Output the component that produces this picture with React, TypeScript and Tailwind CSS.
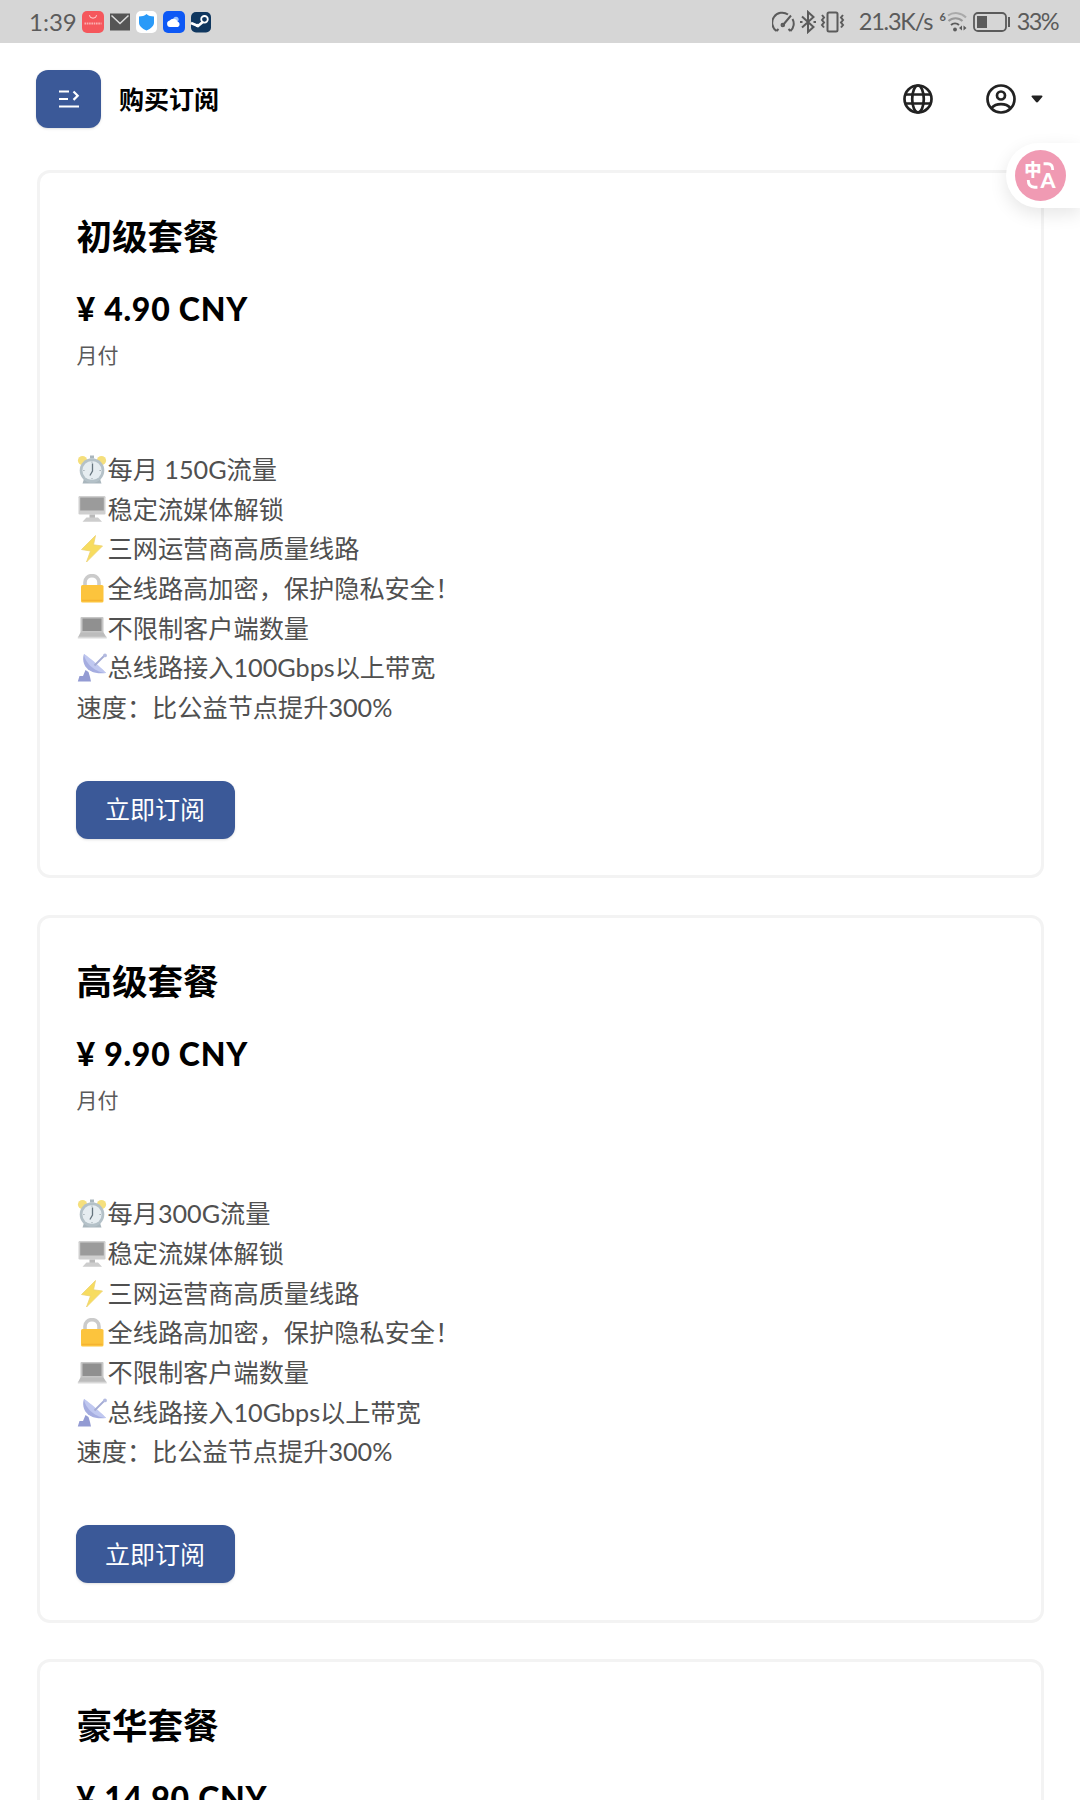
import React from 'react';

interface Plan {
  name: string;
  price: string;
  traffic: string;
  bandwidth: string;
}

const plans: Plan[] = [
  { name: '初级套餐', price: '4.90', traffic: '每月 150G流量', bandwidth: '总线路接入100Gbps以上带宽' },
  { name: '高级套餐', price: '9.90', traffic: '每月300G流量', bandwidth: '总线路接入10Gbps以上带宽' },
  { name: '豪华套餐', price: '14.90', traffic: '每月500G流量', bandwidth: '总线路接入10Gbps以上带宽' },
];

const emojiClass = 'h-[30px] w-[31px] shrink-0';

function ClockIcon() {
  return (
    <svg viewBox="0 0 31 30" className={emojiClass}>
      <circle cx="5.5" cy="5.5" r="4.6" fill="#f5df7c" />
      <circle cx="24.5" cy="5.5" r="4.6" fill="#f5df7c" />
      <path d="M13 .5h4v3h-4zM7 24h16l1.500 4.500h-19z" fill="#a9b6bd" />
      <circle cx="15" cy="15.5" r="12.3" fill="#b4c1c8" />
      <circle cx="15" cy="15.5" r="9.6" fill="#e6edf1" />
      <path d="M15.5 8.5V16l-2.600 4.500" fill="none" stroke="#66757e" strokeWidth="1.300" />
      <path d="M15 6.500v1.200M15 23v1.300M6.300 15.500h1.200M22.500 15.500h1.300" stroke="#9aa6ad" />
    </svg>
  );
}

function DesktopIcon() {
  return (
    <svg viewBox="0 0 31 30" className={emojiClass}>
      <rect x="1.5" y="2" width="27" height="18.500" rx="1.200" fill="#cfcfcf" />
      <rect x="3.200" y="3.500" width="23.600" height="13" fill="#9b9b9b" />
      <path d="M12.500 20.500h5.500v4h-5.500z" fill="#b9b9b9" />
      <path d="M9.500 23.500H21l4 4.200H5.500z" fill="#cdcdcd" />
    </svg>
  );
}

function BoltIcon() {
  return (
    <svg viewBox="0 0 31 30" className={emojiClass}>
      <path d="M18.500 1.500 4.500 15.500l9 1.500L9.500 28 25.500 12l-9-1.200z" fill="#f7dc5f" stroke="#ecd272" strokeWidth=".8" />
    </svg>
  );
}

function LockIcon() {
  return (
    <svg viewBox="0 0 31 30" className={emojiClass}>
      <path d="M8 13V8.300a7 6.700 0 0 1 14 0V13" fill="none" stroke="#cbcbcb" strokeWidth="3.600" />
      <rect x="4" y="11" width="22.500" height="17.500" rx="1.600" fill="#fcc43d" />
      <path d="M5 26.300h20.500" stroke="#f3b02f" />
    </svg>
  );
}

function LaptopIcon() {
  return (
    <svg viewBox="0 0 31 30" className={emojiClass}>
      <path d="M4.500 4h21a1 1 0 0 1 1 1v16h-23V5a1 1 0 0 1 1-1z" fill="#c6c6c6" />
      <path d="M5.500 5.500h19v12.500h-19z" fill="#909090" />
      <path d="M3.500 19.500h23l3 4.700H1z" fill="#bcbcbc" />
      <path d="M.8 23.700h28.900v1.800H.8z" fill="#d8d8d8" />
    </svg>
  );
}

function AntennaIcon() {
  return (
    <svg viewBox="0 0 31 30" className={emojiClass}>
      <path d="M8.500 17 6 23H2.500L.8 28.500H14L13 24l-1.500-5z" fill="#939bd3" />
      <path d="M7 1C4 9 8.500 22.500 29 20z" fill="#a5ade0" />
      <path d="M7 1C11 3 27 17 29 20 20 20 8 11 7 1z" fill="#c0c8f0" />
      <path d="M17.500 12.500 27.500 2.500" stroke="#a4abd4" strokeWidth="1.800" />
      <circle cx="28" cy="2.400" r="1.900" fill="#b3bae0" />
    </svg>
  );
}

function StatusBar() {
  return (
    <div className="flex h-[43px] items-center bg-[#d6d6d6] pr-[22px] pl-[29px] text-[#5b5b5b]">
      <span className="w-[53px] text-[24px] leading-[43px]">1:39</span>
      <div className="flex items-center gap-[5px]">
        <svg viewBox="0 0 22 22" className="size-[22px]">
          <rect width="22" height="22" rx="5" fill="#f5575c" />
          <path d="M7.500 4.200a3.500 3 0 0 0 7 0" fill="none" stroke="#ffd5d5" />
          <path d="M2.500 12.500h17" stroke="#fbb0b0" strokeWidth="2" strokeDasharray="1.6 .7" />
        </svg>
        <svg viewBox="0 0 22 22" className="size-[22px]">
          <path d="M1 2.500h20v17H1z" fill="#555" />
          <path d="m2.500 4.500 8.500 8 8.500-8" fill="none" stroke="#ddd" strokeWidth="1.500" />
        </svg>
        <svg viewBox="0 0 22 22" className="size-[22px]">
          <rect width="21" height="22" rx="5" fill="#fff" />
          <path d="M10.500 3C12.500 4.800 15 5.500 18 5.500v6c0 3.600-3 6-7.500 8C6 17.500 3 15.100 3 11.500v-6c3 0 5.500-.7 7.500-2.500z" fill="#2a9af8" />
        </svg>
        <svg viewBox="0 0 22 22" className="size-[22px]">
          <rect width="22" height="22" rx="5" fill="#0d58f5" />
          <circle cx="13" cy="8.300" r="2.600" fill="#9cc3ff" />
          <path d="M7 16a3.300 3.300 0 0 1-.3-6.500 4.500 4.500 0 0 1 7.800 1A3 3 0 0 1 15 16z" fill="#fff" />
        </svg>
        <svg viewBox="0 0 22 22" className="size-[22px]">
          <rect x="1" y="1" width="20" height="20.500" rx="5" fill="#10375f" />
          <path d="m1 12 7 3 6-5" fill="none" stroke="#fff" strokeWidth="2.800" />
          <circle cx="14.500" cy="8.300" r="3.300" fill="#10375f" stroke="#fff" strokeWidth="1.800" />
          <circle cx="7.500" cy="14.500" r="1.800" fill="#fff" />
        </svg>
      </div>
      <div className="ml-auto flex items-center">
        <svg viewBox="0 0 74 24" className="h-[24px] w-[74px]" fill="none" stroke="#5b5b5b" strokeWidth="2">
          <path d="M4.500 21A9.800 9.800 0 0 1 16 4.500M20.500 9a9.800 9.800 0 0 1-2 12M4.500 21l2-2M18.500 21l-2-2M11 15 19 5.500" />
          <circle cx="10.800" cy="15" r="1.300" />
          <path d="m30 6.500 11.500 10.500L36 22V2l5.500 5L30 17.500M28 12h2.500M41.500 12H44" />
          <rect x="55.500" y="2.500" width="10" height="19" rx="1.500" />
          <path d="m50 5 2 2.500-2 2.500 2 2.500-2 2.500 2 2.500M71 5l-2 2.500 2 2.500-2 2.500 2 2.500-2 2.500" />
        </svg>
        <span className="ml-[13px] w-[82px] text-[23.500px] leading-[43px] tracking-[-1.200px] whitespace-nowrap">21.3K/s</span>
        <svg viewBox="0 0 26 24" className="h-[24px] w-[26px] overflow-visible" fill="none" strokeWidth="2">
          <text x="-1.500" y="11" fontSize="11" fontWeight="700" fill="#5b5b5b">6</text>
          <path d="M7 5.500a14 14 0 0 1 18 2" stroke="#aaa" />
          <path d="M7.500 11a10 10 0 0 1 14 0" stroke="#999" />
          <path d="M10 15a6 6 0 0 1 8 0" stroke="#5b5b5b" />
          <circle cx="14" cy="19.500" r="1.900" fill="#5b5b5b" />
          <path d="m21 15.500-3 2.500 3 2.500zM22.500 15.500l3 2.500-3 2.500z" fill="#5b5b5b" />
        </svg>
        <svg viewBox="0 0 38 22" className="ml-[6px] h-[22px] w-[38px]">
          <rect x="1" y="2" width="32" height="18" rx="4" fill="none" stroke="#5b5b5b" strokeWidth="1.800" />
          <path d="M4 5h10v12H4zM35 6h2v10h-2z" fill="#5b5b5b" />
        </svg>
        <span className="ml-[6px] text-[23.500px] leading-[43px] tracking-[-1.600px]">33%</span>
      </div>
    </div>
  );
}

function Header() {
  return (
    <header className="flex h-[112px] items-center pr-[35px] pl-[36px]">
      <button className="flex h-[58px] w-[65px] items-center justify-center rounded-[12px] bg-[#3b5998] shadow-sm">
        <svg viewBox="0 0 22 20" className="h-[20px] w-[22px]" fill="none" stroke="#fff" strokeWidth="2.200">
          <path d="M1 2.500h10M1 10h9M1 17.500h20M15.500 2.500l4.200 4.200-4.200 4.200" />
        </svg>
      </button>
      <h1 className="ml-[18px] text-[25px] font-bold leading-none text-black">购买订阅</h1>
      <div className="ml-auto flex items-center">
        <svg viewBox="0 0 30 30" className="size-[30px]" fill="none" stroke="#222" strokeWidth="2.700">
          <circle cx="15" cy="15" r="13.500" />
          <ellipse cx="15" cy="15" rx="5.800" ry="13.500" />
          <path d="M2.500 10.500h25M2.500 19.500h25" />
        </svg>
        <svg viewBox="0 0 30 30" className="ml-[53px] size-[30px]" fill="none" stroke="#222" strokeWidth="2.700">
          <circle cx="15" cy="15" r="13.500" />
          <circle cx="15" cy="11.500" r="4" />
          <path d="M5.500 24c4.500-5.300 14.500-5.300 19 0" />
        </svg>
        <svg viewBox="0 0 12 8" className="mr-[2px] ml-[15px] h-[8px] w-[12px]">
          <path d="M1.500.5h9c1 0 1.300 1 .7 1.600l-4 4.700c-.7.800-1.700.8-2.400 0l-4-4.700C.2 1.500.5.500 1.500.500z" fill="#222" />
        </svg>
      </div>
    </header>
  );
}

function PlanCard({ plan }: { plan: Plan }) {
  const features = [
    { icon: <ClockIcon />, text: plan.traffic },
    { icon: <DesktopIcon />, text: '稳定流媒体解锁' },
    { icon: <BoltIcon />, text: '三网运营商高质量线路' },
    { icon: <LockIcon />, text: '全线路高加密，保护隐私安全！' },
    { icon: <LaptopIcon />, text: '不限制客户端数量' },
    { icon: <AntennaIcon />, text: plan.bandwidth },
    { icon: null, text: '速度：比公益节点提升300%' },
  ];

  return (
    <section className="h-[708px] shrink-0 rounded-[13px] border-3 border-[#f3f3f3] px-[37px] pt-[39px]">
      <h2 className="text-[35.500px] font-bold leading-[50px] text-black">{plan.name}</h2>
      <p className="mt-[25px] text-[32px] font-black leading-[44px] tracking-[0.750px] text-black">¥ {plan.price} CNY</p>
      <p className="mt-[8px] text-[21px] leading-[32px] text-[#5a5a5a]">月付</p>
      <ul className="mt-[79px] text-[25.200px] text-[#505050]">
        {features.map((feature, index) => (
          <li key={index} className="flex h-[39.670px] items-center whitespace-nowrap">
            {feature.icon}
            <span>{feature.text}</span>
          </li>
        ))}
      </ul>
      <button className="mt-[53px] -ml-px h-[58px] w-[159px] rounded-[12px] bg-[#3b5998] text-[25px] leading-none text-white shadow-sm">
        立即订阅
      </button>
    </section>
  );
}

function TranslateButton() {
  return (
    <div className="absolute top-[143px] right-0 flex h-[65px] w-[74px] items-center rounded-bl-full rounded-tl-full bg-white pl-[9px] shadow-[0_6px_18px_rgba(0,0,0,0.1)]">
      <svg viewBox="0 0 50 50" className="size-[51px]">
        <circle cx="25" cy="25" r="25" fill="#f09ab3" />
        <text x="9" y="25" fontSize="17" fontWeight="900" fill="#fff">中</text>
        <text x="25" y="37.500" fontSize="21" fontWeight="900" fill="#fff">A</text>
        <path d="M28 13.500h4q5 0 5 6M13 29.500q0 7 6 7h3" fill="none" stroke="#fff" strokeWidth="2.800" />
      </svg>
    </div>
  );
}

export default function App() {
  return (
    <div className="relative h-[1800px] w-[1080px] overflow-hidden bg-white font-[Lato,'Noto_Sans_CJK_SC',sans-serif]">
      <StatusBar />
      <Header />
      <main className="flex flex-col gap-[36.500px] px-[36.500px] pt-[15px]">
        {plans.map((plan) => (
          <PlanCard key={plan.name} plan={plan} />
        ))}
      </main>
      <TranslateButton />
    </div>
  );
}
